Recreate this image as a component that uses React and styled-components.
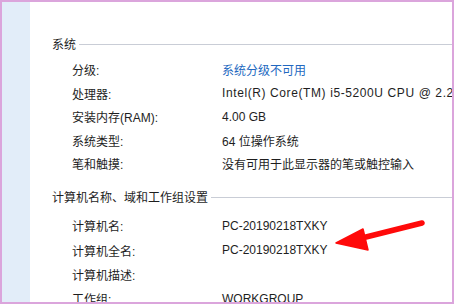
import React from 'react';
import styled, { createGlobalStyle } from 'styled-components';

const Global = createGlobalStyle`
    html, body {
        margin: 0;
        padding: 0;
        background: #ffffff;
    }
    body {
        font-family: "Liberation Sans", "Noto Sans CJK SC", sans-serif;
    }
`;

const systemRows = [
    { label: '分级:', value: '系统分级不可用', link: true },
    { label: '处理器:', value: 'Intel(R) Core(TM) i5-5200U CPU @ 2.20GHz   2.20 GHz', wide: true },
    { label: '安装内存(RAM):', value: '4.00 GB' },
    { label: '系统类型:', value: '64 位操作系统' },
    { label: '笔和触摸:', value: '没有可用于此显示器的笔或触控输入' },
];

const nameRows = [
    { label: '计算机名:', value: 'PC-20190218TXKY' },
    { label: '计算机全名:', value: 'PC-20190218TXKY' },
    { label: '计算机描述:', value: '' },
    { label: '工作组:', value: 'WORKGROUP' },
];

const App = () => {
    return (
        <>
            <Global />
            <Frame>
                <Sidebar />
                <Content>
                    <Section>
                        <Heading gap={6}>系统</Heading>
                        {systemRows.map(r => (
                            <Row key={r.label} h={23.5}>
                                <Label>{r.label}</Label>
                                <Value link={r.link} wide={r.wide}>{r.value}</Value>
                            </Row>
                        ))}
                    </Section>
                    <Section second>
                        <Heading gap={8}>计算机名称、域和工作组设置</Heading>
                        {nameRows.map(r => (
                            <Row key={r.label} h={24.4}>
                                <Label>{r.label}</Label>
                                <Value>{r.value}</Value>
                            </Row>
                        ))}
                    </Section>
                    {/* red annotation arrow pointing at the full computer name */}
                    <Arrow viewBox="0 0 100 34" width="100" height="34">
                        <path d="M88 3 L32 17" stroke="#ff0a0a" strokeWidth="5.5" strokeLinecap="round" />
                        <path d="M2 23 L29 9 L34 30 Z" fill="#ff0a0a" stroke="#ff0a0a" strokeWidth="1.5" strokeLinejoin="round" />
                    </Arrow>
                </Content>
            </Frame>
        </>
    );
};

const Frame = styled.div`
    width: 454px;
    height: 304px;
    box-sizing: border-box;
    border: 2px solid #dba5dc;
    display: flex;
    overflow: hidden;
    background: #ffffff;
`;

const Sidebar = styled.div`
    width: 28px;
    flex-shrink: 0;
    background: #e2edf9;
`;

const Content = styled.div`
    position: relative;
    flex: 1;
    padding: 32px 0 0 22px;
    overflow: hidden;
`;

const Section = styled.div`
    margin-top: ${p => (p.second ? '12px' : '0')};
`;

const Heading = styled.div`
    display: flex;
    align-items: center;
    height: 18px;
    margin-bottom: ${p => p.gap}px;
    font-size: 12px;
    color: #1e1e1e;
    white-space: nowrap;
    &::after {
        content: '';
        flex: 1;
        height: 1px;
        margin-left: 3px;
        margin-top: 2px;
        background: #c9cdd6;
    }
`;

const Row = styled.div`
    display: flex;
    align-items: center;
    height: ${p => p.h}px;
    padding-left: 20px;
    font-size: 12px;
    white-space: nowrap;
`;

const Label = styled.span`
    width: 150px;
    flex-shrink: 0;
    color: #1e1e1e;
`;

const Value = styled.span`
    color: ${p => (p.link ? '#2268c0' : '#1e1e1e')};
    letter-spacing: ${p => (p.wide ? '0.6px' : 'normal')};
`;

const Arrow = styled.svg`
    position: absolute;
    left: 304px;
    top: 218px;
`;

export default App;
